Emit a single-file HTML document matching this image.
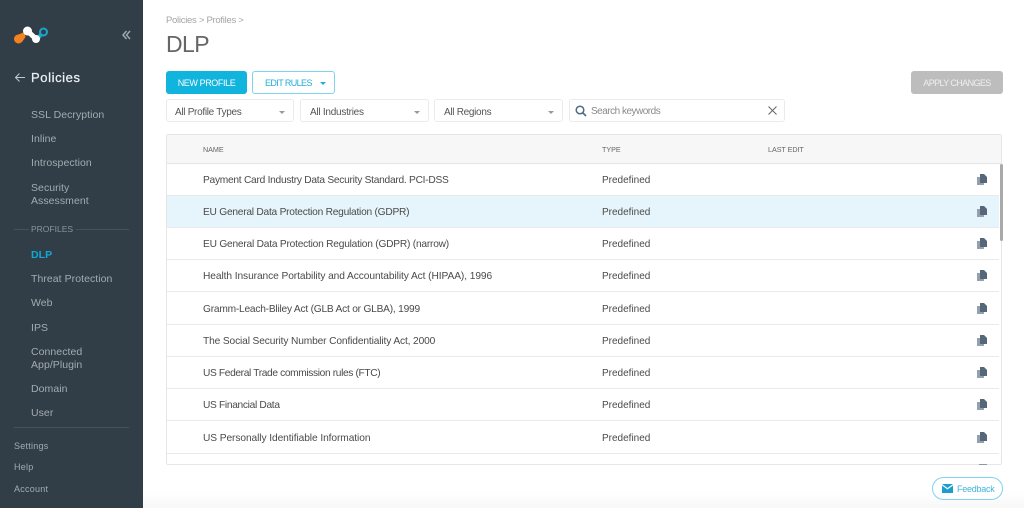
<!DOCTYPE html>
<html><head><meta charset="utf-8">
<style>
html,body{margin:0;padding:0;width:1024px;height:508px;overflow:hidden;background:#fff;font-family:"Liberation Sans",sans-serif;}
.a{position:absolute;white-space:nowrap;}
#side{position:absolute;left:0;top:0;width:143px;height:508px;background:#313e48;}
.n{position:absolute;left:31px;font-size:10.5px;line-height:13px;color:#a3abb0;letter-spacing:.05px;white-space:nowrap;}
.b{position:absolute;left:14px;font-size:9px;line-height:12px;color:#a3abb0;letter-spacing:.25px;}
.sel{position:absolute;top:99px;height:21px;background:#fff;border:1px solid #ebebeb;border-radius:3px;font-size:10px;line-height:26px;color:#555;padding-left:8px;box-sizing:content-box;letter-spacing:-.3px;}
.sel i{position:absolute;top:11px;right:8px;width:0;height:0;border-left:3px solid transparent;border-right:3px solid transparent;border-top:3px solid #999;}
.row{position:absolute;left:167px;width:832px;height:31px;border-bottom:1px solid #eaeaea;}
.row span{position:absolute;top:10px;font-size:10.2px;line-height:13px;color:#4a4a4a;white-space:nowrap;}
.row .t{left:36px;letter-spacing:-.26px;}
.row .p{left:435px;font-size:10px;}
.row svg{position:absolute;left:810px;top:10px;}
.h{position:absolute;top:145px;font-size:7.2px;line-height:9px;color:#666;letter-spacing:-.05px;}
</style></head><body>
<div id="side">
<svg class="a" style="left:13px;top:24px" width="38" height="22" viewBox="0 0 38 22">
<path d="M11.500 8 L12.500 13 L9 18 L2 12Z" fill="#f58220"/>
<circle cx="5.500" cy="15" r="4.500" fill="#f58220"/>
<path d="M22 15 L27 8.500 L30 11.500 L24 18Z" fill="#1aa5cc"/>
<circle cx="30.500" cy="8" r="3.500" fill="#313e48" stroke="#1aa5cc" stroke-width="2"/>
<path d="M14.500 7 L23 15" stroke="#fff" stroke-width="5" stroke-linecap="round"/>
<circle cx="14.500" cy="7" r="4.500" fill="#fff"/>
<circle cx="23" cy="15" r="4" fill="#fff"/>
</svg>
<svg class="a" style="left:122px;top:30px" width="9" height="10" viewBox="0 0 9 10"><path d="M4.500 1 L1 5 L4.500 9 M8 1 L4.500 5 L8 9" fill="none" stroke="#a3abb0" stroke-width="1.400"/></svg>
<svg class="a" style="left:14px;top:72px" width="12" height="11" viewBox="0 0 12 11"><path d="M11 5.500 H1.500 M5.500 1.500 L1.500 5.500 L5.500 9.500" fill="none" stroke="#c4c9cc" stroke-width="1"/></svg>
<div class="a" style="left:31px;top:70px;font-size:13px;line-height:16px;color:#eef0f1;font-weight:400;letter-spacing:.6px;-webkit-text-stroke:.25px #eef0f1">Policies</div>
<div class="n" style="top:109px">SSL Decryption</div>
<div class="n" style="top:133px">Inline</div>
<div class="n" style="top:157px">Introspection</div>
<div class="n" style="top:182px">Security</div>
<div class="n" style="top:195px">Assessment</div>
<div class="a" style="left:14px;top:229px;width:15px;height:1px;background:#46525b"></div>
<div class="a" style="left:31px;top:224px;font-size:8.500px;line-height:11px;color:#8b949a;letter-spacing:0">PROFILES</div>
<div class="a" style="left:76px;top:229px;width:53px;height:1px;background:#46525b"></div>
<div class="n" style="top:249px;color:#10aad6;font-weight:700">DLP</div>
<div class="n" style="top:273px">Threat Protection</div>
<div class="n" style="top:297px">Web</div>
<div class="n" style="top:322px">IPS</div>
<div class="n" style="top:346px">Connected</div>
<div class="n" style="top:359px">App/Plugin</div>
<div class="n" style="top:383px">Domain</div>
<div class="n" style="top:407px">User</div>
<div class="a" style="left:14px;top:427px;width:115px;height:1px;background:#46525b"></div>
<div class="b" style="top:440px">Settings</div>
<div class="b" style="top:461px">Help</div>
<div class="b" style="top:483px">Account</div>
</div>

<div class="a" style="left:166px;top:15px;font-size:9.500px;line-height:12px;color:#a5a5a5;letter-spacing:-.28px">Policies &gt; Profiles &gt;</div>
<div class="a" style="left:166px;top:30px;font-size:23px;line-height:28px;color:#666;font-weight:400;letter-spacing:-.6px">DLP</div>

<div class="a" style="left:166px;top:71px;width:81px;height:23px;background:#10b4dd;border-radius:3px;color:#fff;font-size:9px;letter-spacing:-.4px;line-height:24px;text-align:center;">NEW PROFILE</div>
<div class="a" style="left:252px;top:71px;width:81px;height:21px;border:1px solid #7fd3ec;border-radius:3px;color:#22aed8;font-size:9px;letter-spacing:-.6px;line-height:23px;"><span style="position:absolute;left:12px">EDIT RULES</span><i style="position:absolute;left:67px;top:10px;width:0;height:0;border-left:3px solid transparent;border-right:3px solid transparent;border-top:3px solid #22aed8"></i></div>
<div class="a" style="left:911px;top:71px;width:92px;height:23px;background:#bdbdbd;border-radius:3px;color:#efefef;font-size:9px;letter-spacing:-.6px;line-height:24px;text-align:center;">APPLY CHANGES</div>

<div class="sel" style="left:166px;width:118px">All Profile Types<i></i></div>
<div class="sel" style="left:300px;padding-left:9px;width:118px;letter-spacing:-.25px">All Industries<i></i></div>
<div class="sel" style="left:434px;padding-left:9px;width:118px">All Regions<i></i></div>
<div class="sel" style="left:569px;padding-left:21px;width:193px;color:#8a8a8a;line-height:24px;letter-spacing:-.5px">Search keywords
<svg class="a" style="left:5px;top:5px" width="12" height="12" viewBox="0 0 12 12"><circle cx="5" cy="5" r="3.800" fill="none" stroke="#4e6a85" stroke-width="1.500"/><path d="M7.800 7.800 L11 11" stroke="#4e6a85" stroke-width="1.700"/></svg>
<svg class="a" style="left:198px;top:6px" width="9" height="9" viewBox="0 0 9 9"><path d="M.5 .5 L8.500 8.500 M8.500 .5 L.5 8.500" stroke="#666" stroke-width="1"/></svg>
</div>

<div class="a" style="left:166px;top:134px;width:836px;height:331px;border:1px solid #e6e6e6;border-radius:2px;box-sizing:border-box;background:#fff;"></div>
<div class="a" style="left:167px;top:135px;width:834px;height:28px;background:#f7f7f7;border-bottom:1px solid #e6e6e6"></div>
<div class="h" style="left:203px">NAME</div>
<div class="h" style="left:602px">TYPE</div>
<div class="h" style="left:768px">LAST EDIT</div>

<div class="row" style="top:164px"><span class="t">Payment Card Industry Data Security Standard. PCI-DSS</span><span class="p">Predefined</span><svg width="10" height="11" viewBox="0 0 10 11"><path d="M0 3 H3 V9 H7 V11 H0Z" fill="#94a1ad"/><path d="M3 0 H7 L10 3 V9 H3Z" fill="#56677a"/></svg></div>
<div class="row" style="top:196px;background:#e6f5fb"><span class="t" style="letter-spacing:-.24px">EU General Data Protection Regulation (GDPR)</span><span class="p">Predefined</span><svg width="10" height="11" viewBox="0 0 10 11"><path d="M0 3 H3 V9 H7 V11 H0Z" fill="#94a1ad"/><path d="M3 0 H7 L10 3 V9 H3Z" fill="#56677a"/></svg></div>
<div class="row" style="top:228px"><span class="t" style="letter-spacing:-.22px">EU General Data Protection Regulation (GDPR) (narrow)</span><span class="p">Predefined</span><svg width="10" height="11" viewBox="0 0 10 11"><path d="M0 3 H3 V9 H7 V11 H0Z" fill="#94a1ad"/><path d="M3 0 H7 L10 3 V9 H3Z" fill="#56677a"/></svg></div>
<div class="row" style="top:260px"><span class="t" style="letter-spacing:-.08px">Health Insurance Portability and Accountability Act (HIPAA), 1996</span><span class="p">Predefined</span><svg width="10" height="11" viewBox="0 0 10 11"><path d="M0 3 H3 V9 H7 V11 H0Z" fill="#94a1ad"/><path d="M3 0 H7 L10 3 V9 H3Z" fill="#56677a"/></svg></div>
<div class="row" style="top:293px"><span class="t" style="letter-spacing:-.22px">Gramm-Leach-Bliley Act (GLB Act or GLBA), 1999</span><span class="p">Predefined</span><svg width="10" height="11" viewBox="0 0 10 11"><path d="M0 3 H3 V9 H7 V11 H0Z" fill="#94a1ad"/><path d="M3 0 H7 L10 3 V9 H3Z" fill="#56677a"/></svg></div>
<div class="row" style="top:325px"><span class="t" style="letter-spacing:-.13px">The Social Security Number Confidentiality Act, 2000</span><span class="p">Predefined</span><svg width="10" height="11" viewBox="0 0 10 11"><path d="M0 3 H3 V9 H7 V11 H0Z" fill="#94a1ad"/><path d="M3 0 H7 L10 3 V9 H3Z" fill="#56677a"/></svg></div>
<div class="row" style="top:357px"><span class="t" style="letter-spacing:-.36px">US Federal Trade commission rules (FTC)</span><span class="p">Predefined</span><svg width="10" height="11" viewBox="0 0 10 11"><path d="M0 3 H3 V9 H7 V11 H0Z" fill="#94a1ad"/><path d="M3 0 H7 L10 3 V9 H3Z" fill="#56677a"/></svg></div>
<div class="row" style="top:389px"><span class="t" style="letter-spacing:-.32px">US Financial Data</span><span class="p">Predefined</span><svg width="10" height="11" viewBox="0 0 10 11"><path d="M0 3 H3 V9 H7 V11 H0Z" fill="#94a1ad"/><path d="M3 0 H7 L10 3 V9 H3Z" fill="#56677a"/></svg></div>
<div class="row" style="top:422px"><span class="t" style="letter-spacing:-.08px">US Personally Identifiable Information</span><span class="p">Predefined</span><svg width="10" height="11" viewBox="0 0 10 11"><path d="M0 3 H3 V9 H7 V11 H0Z" fill="#94a1ad"/><path d="M3 0 H7 L10 3 V9 H3Z" fill="#56677a"/></svg></div>
<div class="a" style="left:979px;top:464px;width:8px;height:1px;background:#8b99a7"></div>

<div class="a" style="left:1000px;top:164px;width:3px;height:77px;background:#a9a9a9;border-radius:2px"></div>

<div class="a" style="left:143px;top:490px;width:881px;height:18px;background:linear-gradient(#fff,#f8f8f8)"></div>
<div class="a" style="left:932px;top:477px;width:69px;height:21px;border:1px solid #7fd3ec;border-radius:12px;background:#fff;color:#3fb4dc;font-size:9px;letter-spacing:-.25px;line-height:22px;"><span style="position:absolute;left:24px">Feedback</span>
<svg class="a" style="left:9px;top:6px" width="11" height="9" viewBox="0 0 11 9"><path d="M0 0 H11 L5.500 4Z" fill="#1a9fcd"/><path d="M0 1.500 L5.500 5.500 L11 1.500 V9 H0Z" fill="#1a9fcd"/></svg>
</div>
</body></html>
